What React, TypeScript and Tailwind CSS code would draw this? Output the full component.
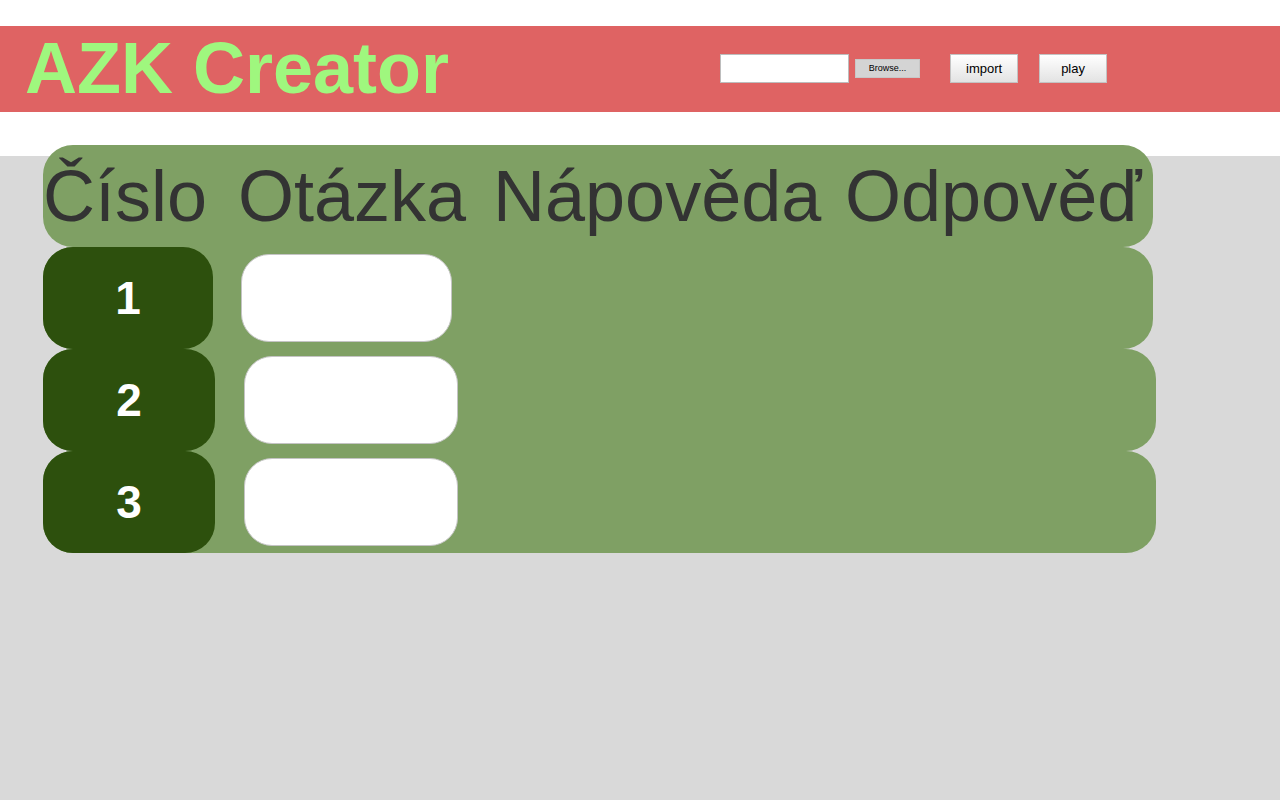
import React from "react";

const rows = [
  { num: 1, rowW: "w-[1110px]", numW: "w-[170px]", gap: "ml-[28px]", inputW: "w-[211px]" },
  { num: 2, rowW: "w-[1113px]", numW: "w-[172px]", gap: "ml-[29px]", inputW: "w-[214px]" },
  { num: 3, rowW: "w-[1113px]", numW: "w-[172px]", gap: "ml-[29px]", inputW: "w-[214px]" },
];

const App: React.FC = () => {
  return (
    <div className="min-h-screen bg-[#d9d9d9] font-['Liberation_Sans',Arial,sans-serif]">
      {/* Header */}
      <div className="h-[156px] bg-white pt-[26px]">
        <header className="flex h-[86px] items-start bg-[#df6363]">
          <h1 className="ml-[25px] mt-[6px] text-[72px] font-bold leading-[72px] text-[#9ff77e]">
            AZK Creator
          </h1>

          {/* Controls */}
          <div className="ml-[271px] mt-[28px] flex items-center">
            <input
              type="text"
              className="h-[29px] w-[129px] border border-[#bdbdbd] bg-white outline-none"
            />
            <button className="ml-[6px] h-[19px] w-[65px] border border-[#c8c8c8] bg-[#d4d4d4] text-[9px] leading-none text-black">
              Browse...
            </button>
            <button className="ml-[30px] h-[29px] w-[68px] border border-[#c3c3c3] bg-gradient-to-b from-white to-[#e3e3e3] text-[13px] text-black">
              import
            </button>
            <button className="ml-[21px] h-[29px] w-[68px] border border-[#c3c3c3] bg-gradient-to-b from-white to-[#e3e3e3] text-[13px] text-black">
              play
            </button>
          </div>
        </header>
      </div>

      {/* Table */}
      <div className="-mt-[11px] ml-[43px] flex flex-col">
        <div className="flex h-[102px] w-[1110px] rounded-[30px] bg-[#7fa064] text-[72px] leading-[102px] text-[#333333]">
          <span className="w-[195px]">Číslo</span>
          <span className="w-[255px]">Otázka</span>
          <span className="w-[352px]">Nápověda</span>
          <span>Odpověď</span>
        </div>

        {rows.map((r) => (
          <div
            key={r.num}
            className={`flex h-[102px] items-center rounded-[30px] bg-[#7fa064] ${r.rowW}`}
          >
            <div
              className={`h-[102px] rounded-[30px] bg-[#2d500d] text-center text-[46px] font-bold leading-[102px] text-white ${r.numW}`}
            >
              {r.num}
            </div>
            <input
              type="text"
              className={`h-[88px] rounded-[28px] border border-[#c4c4c4] bg-white outline-none ${r.gap} ${r.inputW}`}
            />
          </div>
        ))}
      </div>
    </div>
  );
};

export default App;
